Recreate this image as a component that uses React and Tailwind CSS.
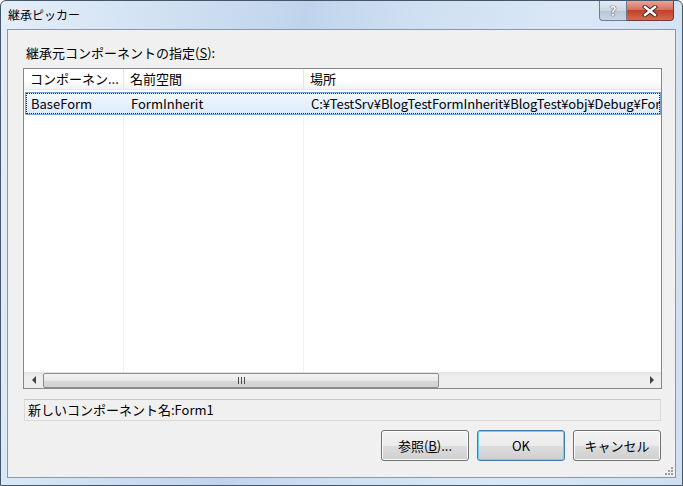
import React from 'react';

const font = "font-['Meiryo_UI','Noto_Sans_CJK_JP',sans-serif]";

function TitleButtons() {
  return (
    <div className="flex self-start mt-0 mr-[8px]">
      <div className="w-[28px] h-[20px] border border-[#6d7b8c] border-t-0 rounded-bl-[4px] bg-[linear-gradient(#e3ebf4,#cbd6e3_50%,#b7c5d6_51%,#c9d6e5)] flex items-center justify-center">
        <span className="text-[13px] font-bold leading-none text-white [text-shadow:0_0_1px_#333,0_0_1px_#333]">?</span>
      </div>
      <div className="w-[47px] h-[20px] border border-[#6d3b34] border-l-0 border-t-0 rounded-br-[4px] bg-[linear-gradient(#e8a596,#d6715f_45%,#c3412a_50%,#d8684f)] flex items-center justify-center">
        <svg width="16" height="12" viewBox="0 0 16 12">
          <path d="M3 2 L13 10 M13 2 L3 10" stroke="#3a2420" strokeWidth="4.2" strokeLinecap="square" />
          <path d="M3 2 L13 10 M13 2 L3 10" stroke="#ffffff" strokeWidth="2.4" strokeLinecap="square" />
        </svg>
      </div>
    </div>
  );
}

function ScrollBar() {
  return (
    <div className="h-[16px] flex items-center bg-[linear-gradient(#e3e3e3,#eeeeee_30%,#eeeeee)]">
      <div className="w-[19px] h-full flex items-center justify-center">
        <div className="w-0 h-0 border-y-[4px] border-y-transparent border-r-[4px] border-r-[#404040]" />
      </div>
      <div className="w-[396px] h-[15px] rounded-[2px] border border-[#8b8b8b] bg-[linear-gradient(#f4f4f4,#e8e8e8_50%,#d8d8d8_51%,#d2d2d2)] flex items-center justify-center">
        <div className="flex gap-[2px]">
          <div className="w-px h-[7px] bg-[#4a4a4a]" />
          <div className="w-px h-[7px] bg-[#4a4a4a]" />
          <div className="w-px h-[7px] bg-[#4a4a4a]" />
        </div>
      </div>
      <div className="flex-1" />
      <div className="w-[19px] h-full flex items-center justify-center">
        <div className="w-0 h-0 border-y-[4px] border-y-transparent border-l-[4px] border-l-[#404040]" />
      </div>
    </div>
  );
}

function ComponentList() {
  return (
    <div className="mt-[7px] ml-[15px] mr-[13px] h-[321px] border border-[#828790] bg-white flex flex-col overflow-hidden">
      {/* column headers */}
      <div className="h-[21px] flex text-[13px] text-black bg-[linear-gradient(#ffffff,#ffffff_55%,#f1f2f4)] border-b border-[#e5e8ec]">
        <div className="w-[100px] pl-[6px] flex items-center border-r border-[#e3e7ec] whitespace-nowrap">コンポーネン...</div>
        <div className="w-[180px] pl-[6px] flex items-center border-r border-[#e3e7ec]">名前空間</div>
        <div className="flex-1 pl-[6px] flex items-center">場所</div>
      </div>
      <div className="flex-1 relative">
        {/* grid lines under the columns */}
        <div className="absolute inset-0 flex pointer-events-none">
          <div className="w-[100px] border-r border-[#eef2f7]" />
          <div className="w-[180px] border-r border-[#eef2f7]" />
        </div>
        <div className="relative mt-[2px] ml-[1px] h-[23px] border border-[#7da2ce] bg-[linear-gradient(#f1f7fe,#dcebfc)]">
          <div className="absolute inset-0 border border-dotted border-[#222]" />
          <div className="relative h-full flex items-center text-[13px] text-black whitespace-nowrap">
            <div className="w-[99px] pl-[5px]">BaseForm</div>
            <div className="w-[180px] pl-[6px]">FormInherit</div>
            <div className="flex-1 pl-[6px] overflow-hidden tracking-[-0.1px]">C:¥TestSrv¥BlogTestFormInherit¥BlogTest¥obj¥Debug¥FormInherit.exe</div>
          </div>
        </div>
      </div>
      <ScrollBar />
    </div>
  );
}

function DialogButton({ children, isDefault }) {
  return (
    <button
      className={`w-[88px] h-[31px] rounded-[3px] border text-[13px] text-black flex items-center justify-center bg-[linear-gradient(#f2f2f2,#ebebeb_50%,#dddddd_51%,#cfcfcf)] ${
        isDefault ? 'border-[#3c7fb1] shadow-[inset_0_0_0_1px_#6bd0f8]' : 'border-[#707070] shadow-[inset_0_0_0_1px_#fbfbfb]'
      }`}
    >
      {children}
    </button>
  );
}

export default function App() {
  return (
    <div className={`${font} w-[683px] h-[486px] flex flex-col rounded-t-[6px] border border-[#45556a] bg-[linear-gradient(100deg,#e4eef9_0%,#d2e2f3_20%,#bfd4ec_40%,#cfe0f2_55%,#dae7f6_75%,#cfe0f2_100%)] overflow-hidden`}>
      {/* title bar */}
      <div className="h-[28px] flex items-start shrink-0">
        <div className="flex-1 pl-[7px] pt-[7px] text-[12px] leading-[14px] text-black">継承ピッカー</div>
        <TitleButtons />
      </div>

      {/* client area */}
      <div className="flex-1 mx-[6px] mb-[7px] border border-[#8b97a6] bg-[#f0f0f0] flex flex-col">
        <div className="pt-[15px] pl-[18px] text-[13px] leading-[16px] text-black">
          継承元コンポーネントの指定(<span className="underline">S</span>):
        </div>
        <ComponentList />

        <div className="mt-[10px] ml-[16px] mr-[14px] h-[22px] border border-[#dadada] border-t-[#c8c8c8] flex items-center pl-[3px] text-[13px] text-black">
          新しいコンポーネント名:Form1
        </div>

        <div className="mt-[9px] mr-[14px] flex justify-end gap-[8px]">
          <DialogButton>
            参照(<span className="underline">B</span>)...
          </DialogButton>
          <DialogButton isDefault>OK</DialogButton>
          <DialogButton>キャンセル</DialogButton>
        </div>

        {/* size grip */}
        <div className="flex-1 flex items-end justify-end pr-[2px] pb-[2px]">
          <div className="grid grid-cols-3 gap-[1px] w-[8px] h-[8px]">
            <span />
            <span />
            <span className="w-[2px] h-[2px] bg-[#a0a0a0]" />
            <span />
            <span className="w-[2px] h-[2px] bg-[#a0a0a0]" />
            <span className="w-[2px] h-[2px] bg-[#a0a0a0]" />
            <span className="w-[2px] h-[2px] bg-[#a0a0a0]" />
            <span className="w-[2px] h-[2px] bg-[#a0a0a0]" />
            <span className="w-[2px] h-[2px] bg-[#a0a0a0]" />
          </div>
        </div>
      </div>
    </div>
  );
}
